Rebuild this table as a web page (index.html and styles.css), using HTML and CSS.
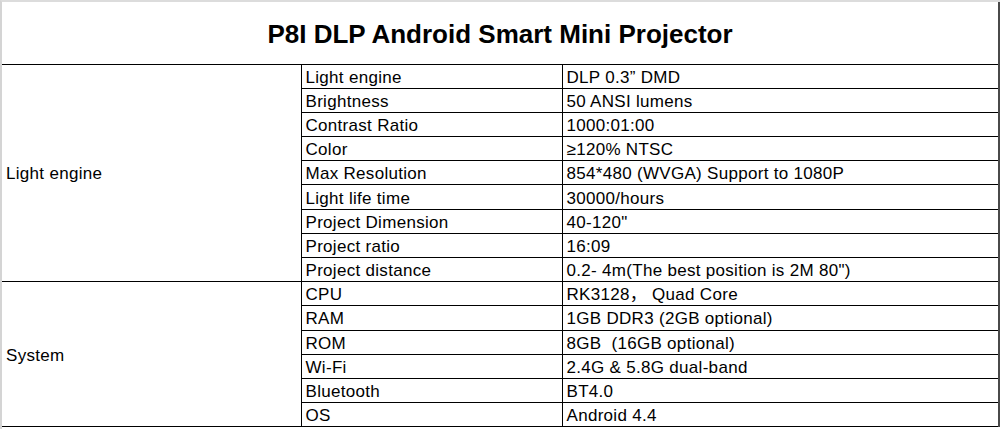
FILE: index.html
```html
<!DOCTYPE html>
<html lang="en">
<head>
<meta charset="utf-8">
<title>P8I DLP Android Smart Mini Projector</title>
<link rel="stylesheet" href="styles.css">
</head>
<body>
<div class="sheet">
  <table class="spec">
    <colgroup>
      <col class="c1">
      <col class="c2">
      <col class="c3">
    </colgroup>
    <thead>
      <tr class="title-row">
        <th colspan="3" class="title">P8I DLP Android Smart Mini Projector</th>
      </tr>
    </thead>
    <tbody>
      <tr>
        <td class="group" rowspan="9">Light engine</td>
        <td>Light engine</td>
        <td>DLP 0.3” DMD</td>
      </tr>
      <tr><td>Brightness</td><td>50 ANSI lumens</td></tr>
      <tr><td>Contrast Ratio</td><td>1000:01:00</td></tr>
      <tr><td>Color</td><td>≥120% NTSC</td></tr>
      <tr><td>Max Resolution</td><td>854*480 (WVGA) Support to 1080P</td></tr>
      <tr><td>Light life time</td><td>30000/hours</td></tr>
      <tr><td>Project Dimension</td><td>40-120"</td></tr>
      <tr><td>Project ratio</td><td>16:09</td></tr>
      <tr><td>Project distance</td><td>0.2- 4m(The best position is 2M 80")</td></tr>
      <tr>
        <td class="group" rowspan="6">System</td>
        <td>CPU</td>
        <td>RK3128，&nbsp;Quad Core</td>
      </tr>
      <tr><td>RAM</td><td>1GB DDR3 (2GB optional)</td></tr>
      <tr><td>ROM</td><td>8GB&nbsp;&nbsp;(16GB optional)</td></tr>
      <tr><td>Wi-Fi</td><td>2.4G &amp; 5.8G dual-band</td></tr>
      <tr><td>Bluetooth</td><td>BT4.0</td></tr>
      <tr><td>OS</td><td>Android 4.4</td></tr>
    </tbody>
  </table>
</div>
</body>
</html>
```

FILE: styles.css
```css
html, body {
  margin: 0;
  padding: 0;
  background: #ffffff;
}

body {
  font-family: "Liberation Sans", Arial, "Noto Sans CJK SC", sans-serif;
  color: #000000;
}

.sheet {
  width: 1000px;
  height: 429px;
  box-sizing: border-box;
  border-top: 2px solid #dcdcdc;
  border-left: 2px solid #d4d4d4;
  overflow: hidden;
}

.spec {
  border-collapse: collapse;
  table-layout: fixed;
  width: 997px;
}

.c1 { width: 299px; }
.c2 { width: 261px; }
.c3 { width: 437px; }

.title-row {
  height: 62px;
}

.title {
  padding: 4px 0 0 0;
  text-align: center;
  vertical-align: middle;
  font-size: 26px;
  font-weight: bold;
  border-bottom: 1px solid #000000;
  border-right: 2px solid #4a4a4a;
}

.spec td {
  height: 24.2px;
  padding: 2px 4px 0 4px;
  box-sizing: border-box;
  font-size: 17px;
  line-height: 19px;
  letter-spacing: 0.3px;
  vertical-align: middle;
  white-space: nowrap;
  border-top: 1px solid #000000;
  border-bottom: 1px solid #000000;
  border-left: 1px solid #000000;
}

.spec td:last-child {
  border-right: 2px solid #4a4a4a;
}

.spec td.group {
  border-left: none;
  padding-left: 4px;
}
```
